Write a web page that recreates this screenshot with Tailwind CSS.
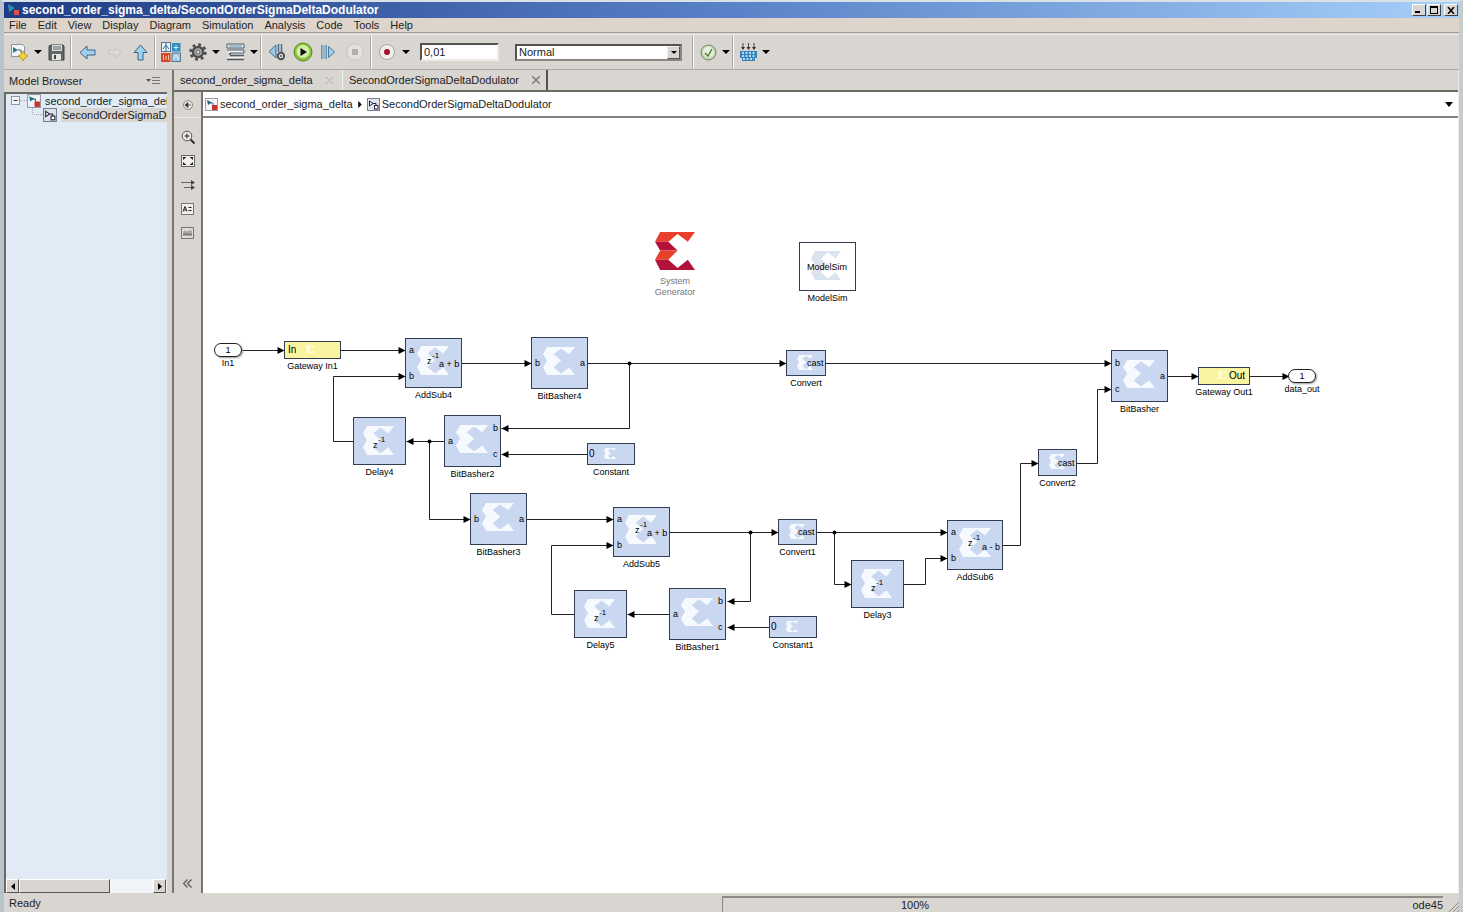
<!DOCTYPE html>
<html lang="en">
<head>
<meta charset="utf-8">
<title>second_order_sigma_delta/SecondOrderSigmaDeltaDodulator</title>
<script src="https://cdn.jsdelivr.net/npm/@tailwindcss/browser@4"></script>
</head>
<body class="flex h-screen flex-col overflow-hidden border-t-2 border-r-4 border-l-4 border-[#d9e2e6] border-r-[#c9cdc9] border-l-[#b9c3cc] bg-[#d9d5d0] font-['Liberation_Sans',Arial,sans-serif] text-[11px] leading-4 text-[#222]">

<svg width="0" height="0" class="absolute">
  <defs>
    <symbol id="sigma" viewBox="0 0 39 37" preserveAspectRatio="none">
      <path d="M5 0H39L32 9.500L22 2L13 9.500L22 18L13 27L22 35L32 27L39 37H5L0 27L5 18L0 9.500Z"/>
    </symbol>
    <symbol id="model" viewBox="0 0 13 13">
      <rect x=".5" y=".5" width="12" height="12" fill="#f4f6fa" stroke="#9a9aa0"/>
      <path d="M2 2l5 2.500L3 7z" fill="#1d6b86"/><path d="M6 5h2v3" fill="none" stroke="#666"/>
      <rect x="7" y="7" width="5" height="5" fill="#c8302f"/>
    </symbol>
    <symbol id="subsys" viewBox="0 0 13 13">
      <rect x=".5" y=".5" width="12" height="12" fill="#dfe4ef" stroke="#77808c"/>
      <path d="M2.500 3v5L6 5.500z" fill="#fff" stroke="#223"/><path d="M6 5.500h3V8" fill="none" stroke="#223"/>
      <rect x="7.500" y="7.500" width="3.500" height="3.500" fill="#fff" stroke="#223"/>
    </symbol>
  </defs>
</svg>

<header class="flex h-4 shrink-0 items-center gap-[2px] bg-linear-to-r from-[#1f3c85] via-[#5a82c8] to-[#a6d0f8] pl-1 text-white">
  <svg class="size-3" viewBox="0 0 12 12"><path d="M0 0l7 4-6 4z" fill="#2f8fb0"/><rect x="6" y="6" width="5" height="5" fill="#e05048"/></svg>
  <h1 class="flex-1 truncate text-xs leading-4 font-bold">second_order_sigma_delta/SecondOrderSigmaDeltaDodulator</h1>
  <div class="flex gap-px pr-px">
    <button aria-label="Minimize" class="flex h-3 w-[14px] items-end border border-white border-r-[#444] border-b-[#444] bg-[#d9d5d0] p-[2px]"><span class="h-[2px] w-[5px] bg-black"></span></button>
    <button aria-label="Maximize" class="flex h-3 w-[14px] items-center justify-center border border-white border-r-[#444] border-b-[#444] bg-[#d9d5d0]"><span class="h-2 w-2 border border-t-2 border-black"></span></button>
    <button aria-label="Close" class="ml-[2px] flex h-3 w-[14px] items-center justify-center border border-white border-r-[#444] border-b-[#444] bg-[#d9d5d0]"><svg class="h-[7px] w-2" viewBox="0 0 8 7"><path d="M1 0l6 7M7 0L1 7" stroke="#000" stroke-width="1.500"/></svg></button>
  </div>
</header>

<nav class="flex h-[15px] shrink-0 items-center gap-[11px] border-b border-[#a19d98] bg-[#ddd5cb] pl-[5px]">
  <button>File</button><button>Edit</button><button>View</button><button>Display</button><button>Diagram</button><button>Simulation</button><button>Analysis</button><button>Code</button><button>Tools</button><button>Help</button>
</nav>

<div role="toolbar" class="mt-px flex h-9 shrink-0 items-center border-t border-b border-t-[#eeebe7] border-b-[#aca8a3] pl-px">
  <button aria-label="New" class="flex w-7 justify-center"><svg class="size-5" viewBox="0 0 20 20"><path d="M2.500 2.500h11l2 2v10h-13z" fill="#f3f6f9" stroke="#8b939b"/><path d="M4 5l5 3-5 3z" fill="#2a7f86"/><path d="M9 8h3v3" fill="none" stroke="#556"/><path d="M14 9l1.800 3.200L19 14l-3.200 1.800L14 19l-1.800-3.200L9 14l3.200-1.800z" fill="#f4d532" stroke="#a98a15" stroke-width=".8"/></svg></button>
  <button aria-label="New options" class="flex w-[10px] justify-center"><svg class="h-1 w-2" viewBox="0 0 8 4"><path d="M0 0h8L4 4z"/></svg></button>
  <button aria-label="Save" class="flex w-[26px] justify-center"><svg class="size-[17px]" viewBox="0 0 17 17"><path d="M1 2l2-1h12l1 1v14H1z" fill="#63676b" stroke="#3f4245"/><rect x="4" y="1" width="10" height="6" fill="#d8dad9"/><path d="M5 3h8M5 5h8" stroke="#666"/><rect x="4" y="10" width="9" height="6" fill="#e3e3df"/><rect x="6" y="11" width="2" height="4" fill="#444"/></svg></button>
  <span class="mx-px h-full w-[2px] border-l border-[#aaa6a1] bg-white"></span>
  <button aria-label="Back" class="flex w-7 justify-center"><svg class="size-[17px]" viewBox="0 0 17 17"><path d="M1 8.500L8 2v4h8v5H8v4z" fill="#9cd1f2" stroke="#42617c"/></svg></button>
  <button aria-label="Forward" disabled class="flex w-[26px] justify-center"><svg class="size-[15px]" viewBox="0 0 17 17"><path d="M16 8.500L9 3v3.500H2v4h7V14z" fill="#dedbd7" stroke="#c4c0bb"/></svg></button>
  <button aria-label="Up" class="flex w-[26px] justify-center"><svg class="size-[17px]" viewBox="0 0 17 17"><path d="M8.500 1L15 8.500h-4V16H6V8.500H2z" fill="#9cd1f2" stroke="#42617c"/></svg></button>
  <span class="mx-px h-full w-[2px] border-l border-[#aaa6a1] bg-white"></span>
  <button aria-label="Library browser" class="flex w-7 justify-center"><svg class="size-5" viewBox="0 0 20 20"><rect x=".5" y=".5" width="9" height="9" fill="#e9f2f8" stroke="#5b7387"/><path d="M2 7l3-4 3 4M5 1v8" stroke="#2f6f9a" fill="none"/><rect x="11" y="1" width="8.500" height="8.500" fill="#2c8ec2"/><path d="M15 3v5M12.500 5.500h5" stroke="#d5effc"/><rect x="0" y="11" width="9.500" height="9" fill="#d4492a"/><path d="M2.500 18v-5M5 18v-4M7.500 18v-5" stroke="#f8c2a8"/><rect x="11" y="11" width="8.500" height="8.500" fill="#a9c9df" stroke="#557890"/><path d="M12 17l3-4 3 5" stroke="#e8f4fb" fill="none"/></svg></button>
  <button aria-label="Settings" class="flex w-[26px] justify-center"><svg class="size-[18px]" viewBox="0 0 18 18"><circle cx="9" cy="9" r="7.200" fill="none" stroke="#4d4f51" stroke-width="3" stroke-dasharray="2.800 2.850"/><circle cx="9" cy="9" r="5" fill="#b5b7b8" stroke="#4d4f51" stroke-width="2.500"/><circle cx="9" cy="9" r="2" fill="#e4e2df" stroke="#555"/></svg></button>
  <button aria-label="Settings options" class="flex w-[10px] justify-center"><svg class="h-1 w-2" viewBox="0 0 8 4"><path d="M0 0h8L4 4z"/></svg></button>
  <button aria-label="Model explorer" class="flex w-7 justify-center"><svg class="h-[18px] w-[19px]" viewBox="0 0 19 18"><path d="M1 1h17v4H1zM1 7h17v3H4" fill="#eef2f4" stroke="#4c5b66"/><path d="M3 3h13" stroke="#4a8bb0"/><path d="M4 12.500h14M1 16.500h17M4 10v2" stroke="#4c5b66" stroke-width="1.500"/><path d="M1 14.500h17" stroke="#f8f8f8"/></svg></button>
  <button aria-label="Model explorer options" class="flex w-[10px] justify-center"><svg class="h-1 w-2" viewBox="0 0 8 4"><path d="M0 0h8L4 4z"/></svg></button>
  <span class="mx-px h-full w-[2px] border-l border-[#aaa6a1] bg-white"></span>
  <button aria-label="Step back" class="flex w-7 justify-center"><svg class="size-[18px]" viewBox="0 0 18 18"><path d="M8 2v13L1 8.500z" fill="#9cc6e4" stroke="#4b6d89"/><path d="M10.500 1v8M13.500 1v8" stroke="#4b6d89" stroke-width="1.500"/><circle cx="13" cy="13" r="3.200" fill="#ddd" stroke="#4f5355" stroke-width="2"/><circle cx="13" cy="13" r="1" fill="#4f5355"/></svg></button>
  <button aria-label="Run" class="flex w-6 justify-center"><svg class="size-5" viewBox="0 0 20 20"><circle cx="10" cy="10" r="9" fill="#8cc63a" stroke="#5c8327"/><circle cx="10" cy="9.500" r="6.500" fill="#d4efaa"/><path d="M7.500 6l6.500 4-6.500 4z" fill="#111"/></svg></button>
  <button aria-label="Step forward" class="flex w-[26px] justify-center"><svg class="size-4" viewBox="0 0 16 16"><path d="M1.500 1.500h1.500v13H1.500zM5 1.500h1.500v13H5z" fill="#bcd9ee" stroke="#5682a5" stroke-width=".8"/><path d="M8.500 2.500v11L14.500 8z" fill="#9fd0ee" stroke="#4b7698"/></svg></button>
  <button aria-label="Stop" disabled class="flex w-7 justify-center"><svg class="size-[18px]" viewBox="0 0 18 18"><circle cx="9" cy="9" r="8" fill="#e6e3df" stroke="#cbc7c2"/><rect x="6" y="6" width="6" height="6" fill="#b1aeaa"/></svg></button>
  <span class="mx-px h-full w-[2px] border-l border-[#aaa6a1] bg-white"></span>
  <button aria-label="Record" class="flex w-7 justify-center"><svg class="size-[18px]" viewBox="0 0 18 18"><circle cx="9" cy="9" r="7.500" fill="#f0eeec" stroke="#a9a6a3"/><circle cx="9" cy="9" r="3" fill="#a80f2c"/></svg></button>
  <button aria-label="Record options" class="flex w-[10px] justify-center"><svg class="h-1 w-2" viewBox="0 0 8 4"><path d="M0 0h8L4 4z"/></svg></button>
  <input aria-label="Stop time" value="0,01" class="ml-[9px] h-[18px] w-[79px] border-2 border-t-[#55534f] border-r-[#efece8] border-b-[#efece8] border-l-[#55534f] bg-white px-[2px] outline-none">
  <div class="relative ml-4 h-[17px] w-[167px]">
    <select aria-label="Simulation mode" class="h-full w-full appearance-none border-2 border-t-[#55534f] border-r-[#8a8782] border-b-[#8a8782] border-l-[#55534f] bg-white px-[2px] leading-3 outline-none"><option>Normal</option></select>
    <span class="pointer-events-none absolute top-[2px] right-[2px] flex h-[13px] w-[13px] items-center justify-center border border-r-[#55534f] border-b-[#55534f] border-l-[#eee] border-t-[#eee] bg-[#d9d5d0]"><svg class="h-[3px] w-[6px]" viewBox="0 0 8 4"><path d="M0 0h8L4 4z"/></svg></span>
  </div>
  <span class="mr-px ml-[10px] h-full w-[2px] border-l border-[#aaa6a1] bg-white"></span>
  <button aria-label="Check model" class="flex w-[26px] justify-center"><svg class="size-[17px]" viewBox="0 0 17 17"><circle cx="8.500" cy="8.500" r="7.500" fill="#c4d9b0" stroke="#72806a"/><circle cx="8.500" cy="8" r="5.500" fill="#e5eedb"/><path d="M5 9l3 3 4-7" fill="none" stroke="#55803b" stroke-width="1.500"/></svg></button>
  <button aria-label="Check options" class="flex w-[10px] justify-center"><svg class="h-1 w-2" viewBox="0 0 8 4"><path d="M0 0h8L4 4z"/></svg></button>
  <span class="mx-px h-full w-[2px] border-l border-[#aaa6a1] bg-white"></span>
  <button aria-label="Build" class="flex w-[26px] justify-center"><svg class="h-[19px] w-[19px]" viewBox="0 0 19 19"><path d="M4 0v6M9.500 0v6M15 0v6" stroke="#444"/><path d="M2 4h4l-2 3zM7.500 4h4l-2 3zM13 4h4l-2 3z" fill="#333"/><path d="M1 8h17v7h-2v3H3v-3H1z" fill="#3484bb"/><path d="M3 10h14M3 13h14M4 16h11" stroke="#e8f5fd" stroke-width="1.500" stroke-dasharray="2 1.500"/></svg></button>
  <button aria-label="Build options" class="flex w-[10px] justify-center"><svg class="h-1 w-2" viewBox="0 0 8 4"><path d="M0 0h8L4 4z"/></svg></button>
</div>

<main class="flex min-h-0 flex-1">
  <aside class="flex w-[163px] shrink-0 flex-col">
    <div class="flex h-[22px] shrink-0 items-center justify-between pr-[7px] pl-[5px]">
      <h2>Model Browser</h2>
      <button aria-label="Panel menu"><svg class="h-2 w-[14px]" viewBox="0 0 14 8"><path d="M0 2h5L2.500 5z" fill="#555"/><path d="M6 .5h8M6 3.500h8M6 6.500h8" stroke="#777"/></svg></button>
    </div>
    <div class="flex min-h-0 flex-1 flex-col overflow-hidden border-t-2 border-l-2 border-[#6b6966] bg-[#e1ebf5]">
      <ul class="flex-1 leading-[14px] whitespace-nowrap">
        <li class="flex items-center pl-[5px]"><svg class="h-[14px] w-4 shrink-0" viewBox="0 0 16 14"><rect x=".5" y="2.500" width="8" height="8" fill="#f5f7fa" stroke="#8f98a3"/><path d="M2.500 6.500h4" stroke="#333"/><path d="M9 6.500h7" stroke="#aaa" stroke-dasharray="1 1"/></svg><svg class="mr-1 size-[14px] shrink-0"><use href="#model"/></svg><button>second_order_sigma_delta</button></li>
        <li class="flex items-center pl-[26px]"><svg class="h-[14px] w-[11px] shrink-0" viewBox="0 0 11 14"><path d="M.5 0v6.500H11" stroke="#aaa" fill="none" stroke-dasharray="1 1"/></svg><svg class="size-[14px] shrink-0"><use href="#subsys"/></svg><button class="ml-1 bg-[#d9d5d0] px-px">SecondOrderSigmaDeltaDodulator</button></li>
      </ul>
      <div class="flex h-[14px] shrink-0 bg-[#f1f5f9]">
        <button aria-label="Scroll left" class="flex w-[13px] items-center justify-center border border-white border-r-[#55534f] border-b-[#55534f] bg-[#d9d5d0]"><svg class="h-[7px] w-1" viewBox="0 0 4 7"><path d="M4 0v7L0 3.500z"/></svg></button>
        <div class="w-[91px] border border-white border-r-[#55534f] border-b-[#55534f] bg-[#d9d5d0]"></div>
        <button aria-label="Scroll right" class="mr-px ml-auto flex w-[13px] items-center justify-center border border-white border-r-[#55534f] border-b-[#55534f] bg-[#d9d5d0]"><svg class="h-[7px] w-1" viewBox="0 0 4 7"><path d="M0 0v7l4-3.500z"/></svg></button>
      </div>
    </div>
  </aside>
  <div class="w-[7px] shrink-0 border-r-2 border-[#777470]"></div>

  <section class="flex min-w-0 flex-1 flex-col">
    <div class="flex h-[22px] shrink-0 items-center border-b-2 border-[#6b6966]" role="tablist">
      <div class="flex h-full w-[169px] items-center justify-between border-r border-[#f3f1ee] pr-[9px] pl-[6px]"><button role="tab" aria-selected="false">second_order_sigma_delta</button><button aria-label="Close tab" class="text-[#b3afab]"><svg class="size-[7px]" viewBox="0 0 7 7"><path d="M0 0l7 7M7 0L0 7" stroke="currentColor"/></svg></button></div>
      <div class="flex h-full w-[205px] items-center justify-between border-r-2 border-[#55534f] pr-[6px] pl-[6px]"><button role="tab" aria-selected="true">SecondOrderSigmaDeltaDodulator</button><button aria-label="Close tab" class="text-[#777]"><svg class="size-2" viewBox="0 0 7 7"><path d="M0 0l7 7M7 0L0 7" stroke="currentColor" stroke-width="1.200"/></svg></button></div>
    </div>
    <div class="flex min-h-0 flex-1">
      <div class="flex w-[27px] shrink-0 flex-col items-center text-[#555]">
        <button aria-label="Hide" class="flex h-[26px] w-full items-center justify-center border-b border-[#eeebe7]"><svg class="size-[10px]" viewBox="0 0 10 10"><circle cx="5" cy="5" r="4.500" fill="#e9e6e2" stroke="#8b8885"/><path d="M8 5H4M5 2.500v5L2 5z" fill="#333" stroke="#333" stroke-width=".6"/></svg></button>
        <button aria-label="Zoom" class="mt-[7px] flex h-6 items-center"><svg class="size-[14px]" viewBox="0 0 14 14"><circle cx="6" cy="6" r="4.800" fill="#efedea" stroke="#555"/><path d="M6 3.500v5M3.500 6h5" stroke="#222"/><path d="M9.500 9.500l4 4" stroke="#333" stroke-width="2"/></svg></button>
        <button aria-label="Fit to view" class="flex h-6 items-center"><svg class="h-3 w-[14px]" viewBox="0 0 14 12"><rect x=".5" y=".5" width="13" height="11" fill="#f2f0ec" stroke="#666"/><path d="M2 2h3.500L2 5zM12 2H8.500L12 5zM2 10h3.500L2 7zM12 10H8.500L12 7z" fill="#222"/></svg></button>
        <button aria-label="Sample time" class="flex h-6 items-center"><svg class="h-[10px] w-[14px]" viewBox="0 0 14 10"><path d="M0 2.500h11M3 7.500h9" stroke="#666" stroke-width="1.200"/><path d="M10 0l4 2.500L10 5zM10 5l4 2.500-4 2.500z" fill="#444"/></svg></button>
        <button aria-label="Annotation" class="flex h-6 items-center"><svg class="h-3 w-[13px]" viewBox="0 0 13 12"><rect x=".5" y=".5" width="12" height="11" fill="#f2f0ec" stroke="#777"/><path d="M2 8.500L4 3.500l2 5M2.800 7h2.400M7.500 4.500h3M7.500 7.500h3" stroke="#222" fill="none"/></svg></button>
        <button aria-label="Image" class="flex h-6 items-center"><svg class="h-3 w-[13px]" viewBox="0 0 13 12"><rect x=".5" y=".5" width="12" height="11" fill="#dedbd7" stroke="#777"/><path d="M2 5c2-3 3 0 5-1s3-1 4 0v5H2z" fill="#aaa7a3"/><path d="M2 8c3-3 5 1 9-1" stroke="#666" fill="none"/></svg></button>
        <button aria-label="Collapse" class="mt-auto mb-[5px]"><svg class="size-[9px]" viewBox="0 0 9 9"><path d="M4.500.5l-4 4 4 4M8.500.5l-4 4 4 4" fill="none" stroke="#555" stroke-width="1.200"/></svg></button>
      </div>

      <div class="flex min-w-0 flex-1 flex-col border-l-2 border-[#77766e]">
        <div class="flex h-[26px] shrink-0 items-center border-b-2 border-[#85827e] bg-white pl-[2px]">
          <svg class="mr-[2px] size-[13px]"><use href="#model"/></svg><a href="#">second_order_sigma_delta</a>
          <svg class="mx-[5px] h-[7px] w-1" viewBox="0 0 4 8"><path d="M0 0v8l4-4z"/></svg>
          <svg class="mr-[2px] size-[13px]"><use href="#subsys"/></svg><a href="#">SecondOrderSigmaDeltaDodulator</a>
          <button aria-label="Path history" class="mr-[5px] ml-auto"><svg class="h-[5px] w-2" viewBox="0 0 8 5"><path d="M0 0h8L4 5z"/></svg></button>
        </div>
        <div id="canvas" class="relative min-h-0 flex-1 overflow-hidden bg-white text-[9px] leading-[10px] whitespace-nowrap text-black"></div>
      </div>
    </div>
  </section>
  <div class="w-px shrink-0 bg-[#f0eeeb]"></div>
</main>

<footer class="flex h-[19px] shrink-0 items-center pl-[5px]">
  <span class="flex-1">Ready</span>
  <div class="mt-[3px] flex h-4 w-[721px] items-center justify-between border-t-2 border-l border-[#8d8a86] pl-[178px]"><span>100%</span><span>ode45</span></div>
  <svg class="ml-1 size-3 self-end" viewBox="0 0 12 12"><path d="M2 12L12 2M6 12l6-6M10 12l2-2" stroke="#8d8a86"/></svg>
</footer>

<script>
// Model coordinates of the canvas' top left corner
const OX = 203, OY = 118;

// x, y, w, h, fill, label, logo [dx, dy, w, h], texts [dx, dy, text]
const BLUE = '#cad7f0', YELLOW = '#f8f4a0';
const big = [12, 10, 32, 28];
const blocks = [
  [284, 341, 57, 18, YELLOW, 'Gateway In1', [22, 4, 9, 8], [[4, 9, 'In', 10]]],
  [405, 338, 57, 50, BLUE, 'AddSub4', [12, 8, 32, 29], [[4, 12, 'a'], [4, 38, 'b'], [34, 26, 'a + b'], [22, 23, 'z'], [27, 18, '-1', 8]]],
  [531, 337, 57, 52, BLUE, 'BitBasher4', big, [[4, 26, 'b'], [49, 26, 'a']]],
  [353, 417, 53, 48, BLUE, 'Delay4', [10, 9, 31, 29], [[20, 28, 'z'], [25, 23, '-1', 8]]],
  [444, 415, 57, 52, BLUE, 'BitBasher2', big, [[4, 26, 'a'], [49, 13, 'b'], [49, 39, 'c']]],
  [587, 443, 48, 22, BLUE, 'Constant', [17, 5, 12, 11], [[2, 11, '0', 10]]],
  [470, 493, 57, 52, BLUE, 'BitBasher3', big, [[4, 26, 'b'], [49, 26, 'a']]],
  [613, 507, 57, 50, BLUE, 'AddSub5', [12, 8, 32, 29], [[4, 12, 'a'], [4, 38, 'b'], [34, 26, 'a + b'], [22, 23, 'z'], [27, 18, '-1', 8]]],
  [574, 590, 53, 48, BLUE, 'Delay5', [10, 9, 31, 29], [[20, 28, 'z'], [25, 23, '-1', 8]]],
  [669, 588, 57, 52, BLUE, 'BitBasher1', big, [[4, 26, 'a'], [49, 13, 'b'], [49, 39, 'c']]],
  [769, 616, 48, 22, BLUE, 'Constant1', [17, 5, 12, 11], [[2, 11, '0', 10]]],
  [778, 519, 39, 26, BLUE, 'Convert1', [11, 5, 16, 15], [[20, 13, 'cast']]],
  [786, 350, 40, 26, BLUE, 'Convert', [11, 5, 16, 15], [[21, 13, 'cast']]],
  [851, 560, 53, 48, BLUE, 'Delay3', [10, 9, 31, 29], [[20, 28, 'z'], [25, 23, '-1', 8]]],
  [947, 520, 56, 50, BLUE, 'AddSub6', [12, 8, 32, 29], [[4, 12, 'a'], [4, 38, 'b'], [35, 27, 'a - b'], [21, 23, 'z'], [26, 18, '-1', 8]]],
  [1038, 449, 39, 27, BLUE, 'Convert2', [11, 5, 16, 15], [[20, 14, 'cast']]],
  [1111, 350, 57, 52, BLUE, 'BitBasher', big, [[4, 13, 'b'], [4, 39, 'c'], [49, 26, 'a']]],
  [1198, 367, 52, 18, YELLOW, 'Gateway Out1', [20, 4, 9, 8], [[31, 9, 'Out', 10]]],
  [799, 242, 57, 49, '#ffffff', 'ModelSim', [12, 9, 30, 29], [[8, 25, 'ModelSim', 9]]],
];
const ports = [[214, 343, 'In1'], [1288, 369, 'data_out']];

// Signal lines; the last point carries an arrow head
const wires = [
  [242,350, 284,350], [340,350, 405,350], [461,363, 531,363], [353,441, 333,441, 333,376, 405,376],
  [587,363, 786,363], [629,363, 629,428, 501,428], [587,454, 501,454], [444,441, 406,441],
  [429,441, 429,519, 470,519], [526,519, 613,519], [669,532, 778,532], [750,532, 750,601, 727,601],
  [769,627, 727,627], [669,614, 627,614], [574,614, 551,614, 551,545, 613,545], [816,532, 947,532],
  [834,532, 834,584, 851,584], [903,584, 925,584, 925,558, 947,558],
  [1002,545, 1020,545, 1020,463, 1038,463], [1076,463, 1097,463, 1097,389, 1111,389],
  [825,363, 1111,363], [1167,376, 1198,376], [1249,376, 1289,376],
];
const dots = [[629,363], [429,441], [750,532], [834,532]];

let svg = '';
for (const w of wires) {
  const n = w.length, x = w[n - 2], y = w[n - 1], s = x > w[n - 4] ? -7 : 7;
  svg += `<polyline points="${w.join(' ')}" fill="none" stroke="#222"/><path d="M${x} ${y}l${s} -3.500v7z"/>`;
}
for (const [x, y] of dots) svg += `<circle cx="${x}" cy="${y}" r="2"/>`;
let html = `<svg class="absolute inset-0" width="1200" height="700" viewBox="${OX - .5} ${OY - .5} 1200 700">${svg}</svg>`;

for (const [x, y, w, h, fill, label, logo, texts] of blocks) {
  const logoFill = fill === '#ffffff' ? '#dbe3ef' : fill === YELLOW ? '#fffde0' : '#f6faff';
  html += `<div class="absolute border border-[#333d52]" style="left:${x - OX}px;top:${y - OY}px;width:${w}px;height:${h}px;background:${fill}">
    <svg class="absolute" style="left:${logo[0] - 1}px;top:${logo[1] - 1}px" width="${logo[2]}" height="${logo[3]}" fill="${logoFill}"><use href="#sigma"/></svg>` +
    texts.map(([dx, dy, t, size = 9]) => `<span class="absolute -translate-y-1/2" style="left:${dx - 1}px;top:${dy - 1}px;font-size:${size}px">${t}</span>`).join('') +
    `<span class="absolute top-full left-1/2 mt-[3px] -translate-x-1/2">${label}</span></div>`;
}
for (const [x, y, label] of ports) {
  html += `<div class="absolute h-[14px] w-7 rounded-full border border-[#222] bg-white text-center leading-3 shadow-[1px_1px_2px_#999]" style="left:${x - OX}px;top:${y - OY}px">1<span class="absolute top-full left-1/2 -translate-x-1/2 leading-[14px]">${label}</span></div>`;
}
html += `<div class="absolute flex w-[60px] flex-col items-center text-center leading-[11px] whitespace-normal text-[#777]" style="left:${645 - OX}px;top:${232 - OY}px">
  <svg class="mb-[6px] h-[38px] w-[40px]" viewBox="0 0 39 37"><path d="M5 0H39L32 9.500L22 2L13 9.500H0Z" fill="#e9402c"/><path d="M0 9.500H13L22 18H5Z" fill="#b3123a"/><path d="M5 18H22L13 27H0Z" fill="#e9402c"/><path d="M0 27H13L22 35L32 27L39 37H5Z" fill="#b3123a"/></svg>
  <span>System</span><span>Generator</span></div>`;
document.getElementById('canvas').innerHTML = html;
</script>
</body>
</html>
